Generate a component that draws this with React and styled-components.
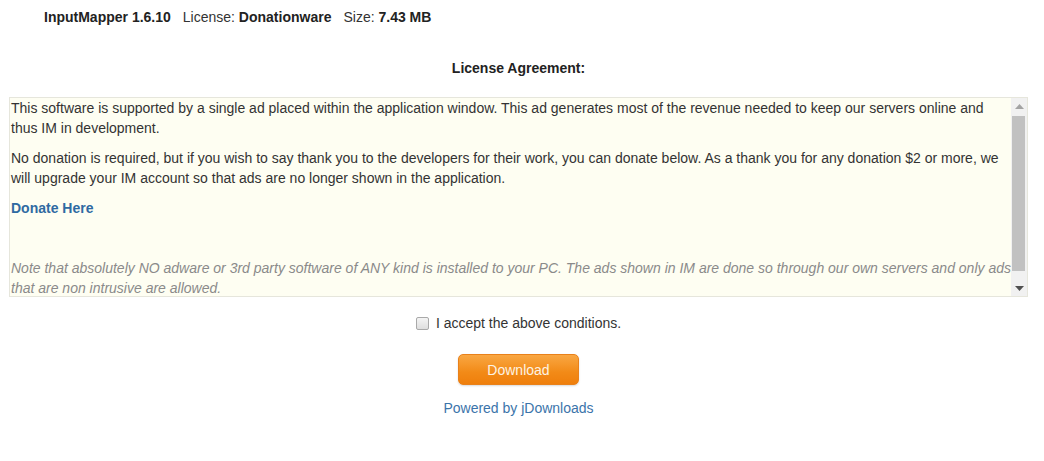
import React from "react";
import styled, { createGlobalStyle } from "styled-components";

const Global = createGlobalStyle`
  html, body { margin: 0; padding: 0; background: #fff; }
  body { font-family: "Liberation Sans", Arial, sans-serif; color: #333; }
`;

const Page = styled.div`
  width: 1019px;
  padding: 0 0 0 9px;
  display: flex;
  flex-direction: column;
`;

const InfoBar = styled.div`
  padding: 8px 0 0 35px;
  font-size: 14px;
  line-height: 18px;
  color: #333;
  display: flex;
  gap: 12px;
`;

const InfoItem = styled.span`
  b { font-weight: bold; color: #222; }
`;

const Title = styled.div`
  margin-top: 33px;
  text-align: center;
  font-size: 14px;
  line-height: 18px;
  font-weight: bold;
  color: #222;
`;

const LicenseBox = styled.div`
  margin-top: 20px;
  height: 200px;
  box-sizing: border-box;
  border: 1px solid #e6e6dc;
  background: #fefef2;
  display: flex;
`;

const LicenseText = styled.div`
  flex: 1;
  overflow: hidden;
  padding: 0 0 0 1px;
  font-size: 14px;
  line-height: 20px;
  color: #333;
`;

const ScrollBar = styled.div`
  width: 16px;
  flex: none;
  background: #f1f1f1;
  display: flex;
  flex-direction: column;
`;

const ScrollArrow = styled.div`
  height: 16px;
  display: flex;
  align-items: center;
  justify-content: center;
`;

const ScrollTrack = styled.div`
  flex: 1;
  padding: 2px 2px 0 1px;
`;

const ScrollThumb = styled.div`
  height: 155px;
  background: #c1c1c1;
`;

const Para = styled.p`
  margin: 0 0 10px 0;
  color: ${(p) => (p.$note ? "#8a8a8a" : "#333")};
  font-style: ${(p) => (p.$note ? "italic" : "normal")};
  min-height: 20px;
`;

const DonateLink = styled.a`
  color: #2f6aa2;
  font-weight: bold;
  text-decoration: none;
`;

const AcceptRow = styled.label`
  margin-top: 16px;
  display: flex;
  justify-content: center;
  align-items: center;
  gap: 7px;
  font-size: 14px;
  line-height: 20px;
  color: #333;
`;

const Check = styled.input`
  appearance: none;
  margin: 0;
  width: 13px;
  height: 13px;
  border: 1px solid #a9a9a9;
  border-radius: 2px;
  background: linear-gradient(#f4f4f4, #dedede);
  box-sizing: border-box;
`;

const ButtonRow = styled.div`
  margin-top: 21px;
  display: flex;
  justify-content: center;
`;

const DownloadButton = styled.button`
  width: 121px;
  height: 31px;
  border: 1px solid #e9811a;
  border-radius: 5px;
  background: linear-gradient(#f9a742, #f28a17 60%, #ef7f0c);
  box-shadow: 0 1px 2px rgba(0,0,0,0.15);
  color: #fdf3e3;
  font-family: "Liberation Sans", Arial, sans-serif;
  font-size: 14px;
  padding: 0;
`;

const Powered = styled.a`
  margin-top: 13px;
  align-self: center;
  font-size: 14px;
  line-height: 20px;
  color: #3b74aa;
  text-decoration: none;
`;

const Arrow = ({ up }) => (
  <svg width="9" height="5" viewBox="0 0 9 5">
    {up ? (
      <path d="M0 5 L4.5 0 L9 5 Z" fill="#a3a3a3" />
    ) : (
      <path d="M0 0 L4.5 5 L9 0 Z" fill="#505050" />
    )}
  </svg>
);

export default function App() {
  return (
    <>
      <Global />
      <Page>
        <InfoBar>
          <InfoItem><b>InputMapper 1.6.10</b></InfoItem>
          <InfoItem>License: <b>Donationware</b></InfoItem>
          <InfoItem>Size: <b>7.43 MB</b></InfoItem>
        </InfoBar>
        <Title>License Agreement:</Title>
        <LicenseBox>
          <LicenseText>
            <Para>
              This software is supported by a single ad placed within the application window. This ad generates most of the revenue needed to keep our servers online and thus IM in development.
            </Para>
            <Para>
              No donation is required, but if you wish to say thank you to the developers for their work, you can donate below. As a thank you for any donation $2 or more, we will upgrade your IM account so that ads are no longer shown in the application.
            </Para>
            <Para>
              <DonateLink href="#">Donate Here</DonateLink>
            </Para>
            <Para>{"\u00a0"}</Para>
            <Para $note>
              Note that absolutely NO adware or 3rd party software of ANY kind is installed to your PC. The ads shown in IM are done so through our own servers and only ads that are non intrusive are allowed.
            </Para>
          </LicenseText>
          <ScrollBar>
            <ScrollArrow><Arrow up /></ScrollArrow>
            <ScrollTrack><ScrollThumb /></ScrollTrack>
            <ScrollArrow><Arrow /></ScrollArrow>
          </ScrollBar>
        </LicenseBox>
        <AcceptRow>
          <Check type="checkbox" />
          I accept the above conditions.
        </AcceptRow>
        <ButtonRow>
          <DownloadButton>Download</DownloadButton>
        </ButtonRow>
        <Powered href="#">Powered by jDownloads</Powered>
      </Page>
    </>
  );
}
